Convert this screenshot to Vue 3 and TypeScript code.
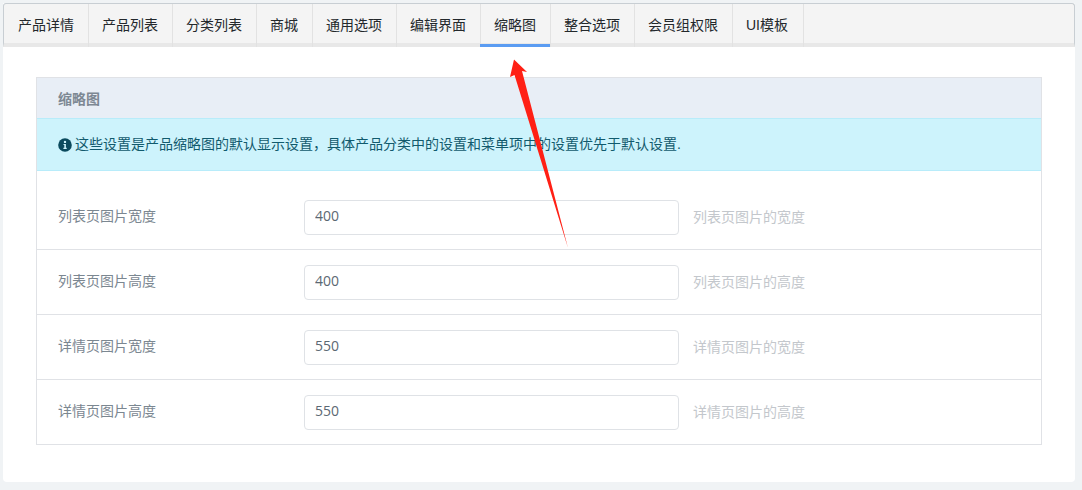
<script setup lang="ts">
const tabs = ['产品详情', '产品列表', '分类列表', '商城', '通用选项', '编辑界面', '缩略图', '整合选项', '会员组权限', 'UI模板']
const rows = [
  { label: '列表页图片宽度', value: '400', hint: '列表页图片的宽度' },
  { label: '列表页图片高度', value: '400', hint: '列表页图片的高度' },
  { label: '详情页图片宽度', value: '550', hint: '详情页图片的宽度' },
  { label: '详情页图片高度', value: '550', hint: '详情页图片的高度' },
]
</script>

<template>
  <div class="page">
    <div class="card">
      <ul class="tabs">
        <li v-for="t in tabs" :key="t" class="tab" :class="{ active: t === '缩略图' }">{{ t }}</li>
      </ul>
      <div class="body">
        <section class="panel">
          <h2 class="panel-title">缩略图</h2>
          <div class="alert">
            <svg class="info" viewBox="0 0 14 14" width="14" height="14" aria-hidden="true">
              <circle cx="7" cy="7" r="6.8" fill="#0b4a5e" />
              <circle cx="7" cy="3.9" r="1.2" fill="#cdf3fc" />
              <path d="M5.5 6h2.4v3.8h.8v1.1H5.4V9.8h.9V7.1h-.8z" fill="#cdf3fc" />
            </svg>
            <span class="alert-text">这些设置是产品缩略图的默认显示设置，具体产品分类中的设置和菜单项中的设置优先于默认设置.</span>
          </div>
          <div class="rows">
            <div v-for="r in rows" :key="r.label" class="row">
              <label class="label">{{ r.label }}</label>
              <input class="input" type="text" :value="r.value" />
              <span class="hint">{{ r.hint }}</span>
            </div>
          </div>
        </section>
      </div>
    </div>
    <svg class="arrow" width="80" height="200" viewBox="505 55 80 200" aria-hidden="true">
      <polygon points="514,59.5 527,72 522,71 568,248 514.5,75 510,77" fill="#ff2015" />
    </svg>
  </div>
</template>

<style>
html, body { margin: 0; background: #f0f3f5; }
</style>

<style scoped>
.page {
  position: relative;
  width: 1082px;
  height: 490px;
  padding: 3px 7px 8px 3px;
  box-sizing: border-box;
  background: #f0f3f5;
  font-family: "Liberation Sans", "Noto Sans CJK SC", sans-serif;
  font-size: 14px;
  overflow: hidden;
}
.card {
  height: 100%;
  background: #fff;
  border-radius: 0 0 4px 4px;
  display: flex;
  flex-direction: column;
}
.tabs {
  display: flex;
  margin: 0;
  padding: 0;
  list-style: none;
  height: 44px;
  box-sizing: border-box;
  background: #f4f4f4;
  border: 1px solid #c8ced3;
  border-bottom: 4px solid #e8e8e8;
  border-radius: 3px 3px 0 0;
}
.tab {
  padding: 0 14px;
  line-height: 43px;
  height: 43px;
  box-sizing: border-box;
  color: #23282c;
  box-shadow: 1px 0 0 #e2e2e2;
  white-space: nowrap;
}
.tab:last-child {
  padding-right: 15px;
}
.tab.active {
  border-bottom: 3px solid #5b9cf2;
}
.body {
  flex: 1;
  padding: 30px 33px 37px;
}
.panel {
  border: 1px solid #e0e2e6;
  background: #fff;
}
.panel-title {
  margin: 0;
  height: 40px;
  padding-left: 21px;
  line-height: 42px;
  font-size: 14px;
  font-weight: 700;
  color: #7d8893;
  background: #e8eef6;
}
.alert {
  display: flex;
  align-items: center;
  gap: 3px;
  height: 53px;
  box-sizing: border-box;
  padding: 0 21px;
  background: #cdf3fc;
  border-top: 1px solid #b8ecfa;
  border-bottom: 1px solid #b8ecfa;
  color: #115a6d;
}
.alert-text {
  padding-bottom: 4px;
}
.info { flex: none; }
.rows { padding-top: 14px; }
.row {
  display: flex;
  align-items: center;
  height: 65px;
  box-sizing: border-box;
  padding: 0 21px;
  border-bottom: 1px solid #e0e2e6;
}
.row:last-child { border-bottom: 0; height: 64px; }
.label {
  width: 246px;
  padding-bottom: 4px;
  color: #7b8791;
}
.input {
  width: 375px;
  height: 35px;
  box-sizing: border-box;
  padding: 0 10px 3px;
  border: 1px solid #dfe2e6;
  border-radius: 4px;
  outline: none;
  background: #fff;
  color: #5c6873;
  font: inherit;
  font-family: "Open Sans", sans-serif;
}
.hint {
  margin-left: 14px;
  padding-bottom: 2px;
  color: #c3c7cc;
}
.arrow {
  position: absolute;
  left: 505px;
  top: 55px;
}
</style>
